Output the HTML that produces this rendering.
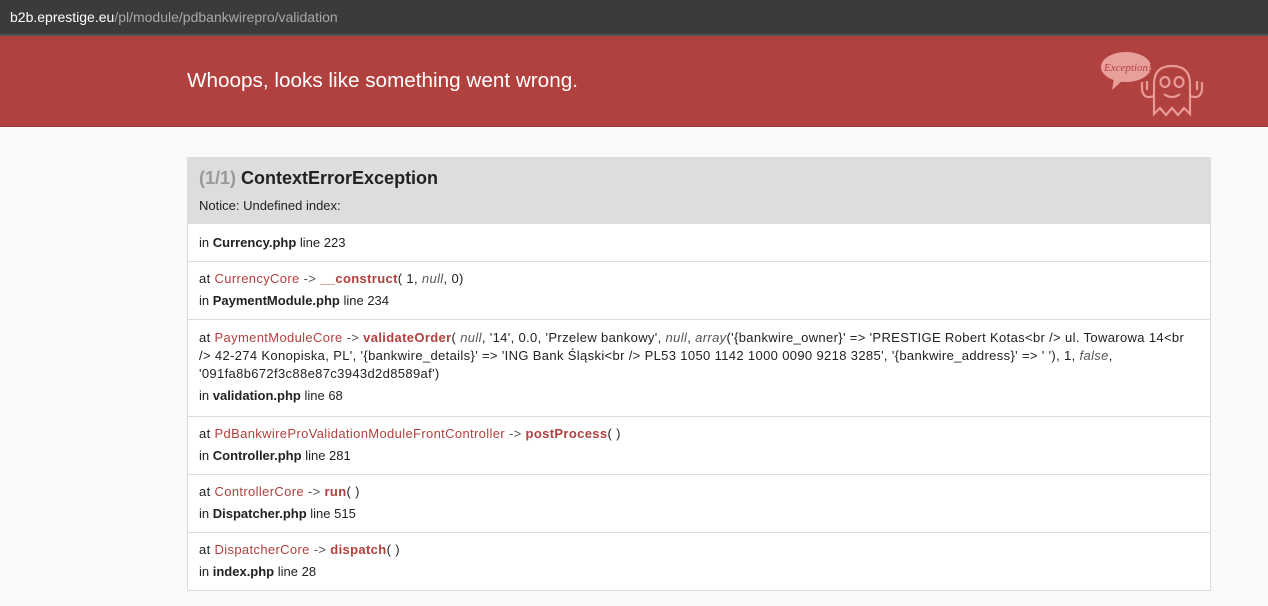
<!DOCTYPE html>
<html><head><meta charset="utf-8"><style>
body{margin:0;width:1268px;height:606px;background:#f9f9f9;font-family:"Liberation Sans",Arial,sans-serif;overflow:hidden;position:relative}
.bar{position:absolute;left:0;top:0;width:1268px;height:34px;background:#3b3b3b;border-bottom:2px solid #555}
.bar span{position:absolute;left:10px;top:9px;font-size:14px;color:#fff}
.bar i{font-style:normal;color:#a8a8a8}
.hdr{position:absolute;left:0;top:36px;width:1268px;height:90px;background:#b0413e;border-bottom:1px solid #a03a38}
.hdr h1{position:absolute;left:187px;top:33px;margin:0;font-size:20.7px;font-weight:normal;color:#fff}
.box{position:absolute;left:187px;top:157px;width:1022px;border:1px solid #ddd;background:#fff}
.top{background:#ddd;padding:10px 11px 9px;height:46px}
.top .t{font-size:18px;font-weight:bold;color:#222}
.top .t b{color:#999}
.top .n{font-size:13px;color:#222;margin-top:9px}
.row{border-top:1px solid #ddd;padding:8px 11px 9px;font-size:13px;line-height:18px;color:#222}
.row.one{padding:10px 11px 9px}
.row.wide{padding:9px 11px 11px}
.row p{margin:0}
.row p.at{letter-spacing:.35px}
.row p+p{margin-top:4px}
.c{color:#b0413e}
.m{color:#b0413e;font-weight:bold}
.a{color:#555}
em{color:#555}
</style></head><body>
<div class="bar"><span>b2b.eprestige.eu<i>/pl/module/pdbankwirepro/validation</i></span></div>
<div class="hdr"><h1>Whoops, looks like something went wrong.</h1>
<svg style="position:absolute;left:1098px;top:10px" width="115" height="75" viewBox="0 0 115 75" fill="none" stroke="#e89a98" stroke-width="2.2">
<ellipse cx="28" cy="21" rx="25" ry="15" fill="#e9a09d" stroke="none"/>
<path d="M16 33 L14 44 L25 34" fill="#e9a09d" stroke="none"/>
<text x="6" y="25" font-size="11" font-style="italic" fill="#b0413e" stroke="none" font-family="Liberation Serif">Exception!</text>
<path d="M56 68 V38 Q56 20 74 20 Q92 20 92 38 V68 L86 62 L80 69 L74 62 L68 69 L62 62 Z"/>
<ellipse cx="67" cy="36" rx="4.5" ry="5"/><ellipse cx="81" cy="36" rx="4.5" ry="5"/>
<path d="M66 48 Q74 54 82 48"/>
<path d="M56 50 Q46 54 44 44 M44 44 V36 M49 44 V35"/>
<path d="M92 50 Q102 54 104 44 M104 44 V36 M99 44 V35"/>
</svg></div>
<div class="box">
<div class="top"><div class="t"><b>(1/1)</b> ContextErrorException</div><div class="n">Notice: Undefined index: </div></div>
<div class="row one"><p>in <b>Currency.php</b> line 223</p></div>
<div class="row"><p class="at">at <span class="c">CurrencyCore</span> <span class="a">-&gt;</span> <span class="m">__construct</span>( 1, <em>null</em>, 0)</p><p>in <b>PaymentModule.php</b> line 234</p></div>
<div class="row wide"><p class="at">at <span class="c">PaymentModuleCore</span> <span class="a">-&gt;</span> <span class="m">validateOrder</span>( <em>null</em>, '14', 0.0, 'Przelew bankowy', <em>null</em>, <em>array</em>('{bankwire_owner}' =&gt; 'PRESTIGE Robert Kotas&lt;br /&gt; ul. Towarowa 14&lt;br<br>/&gt; 42-274 Konopiska, PL', '{bankwire_details}' =&gt; 'ING Bank Śląski&lt;br /&gt; PL53 1050 1142 1000 0090 9218 3285', '{bankwire_address}' =&gt; ' '), 1, <em>false</em>,<br>'091fa8b672f3c88e87c3943d2d8589af')</p><p>in <b>validation.php</b> line 68</p></div>
<div class="row"><p class="at">at <span class="c">PdBankwireProValidationModuleFrontController</span> <span class="a">-&gt;</span> <span class="m">postProcess</span>( )</p><p>in <b>Controller.php</b> line 281</p></div>
<div class="row"><p class="at">at <span class="c">ControllerCore</span> <span class="a">-&gt;</span> <span class="m">run</span>( )</p><p>in <b>Dispatcher.php</b> line 515</p></div>
<div class="row"><p class="at">at <span class="c">DispatcherCore</span> <span class="a">-&gt;</span> <span class="m">dispatch</span>( )</p><p>in <b>index.php</b> line 28</p></div>
</div>
</body></html>
